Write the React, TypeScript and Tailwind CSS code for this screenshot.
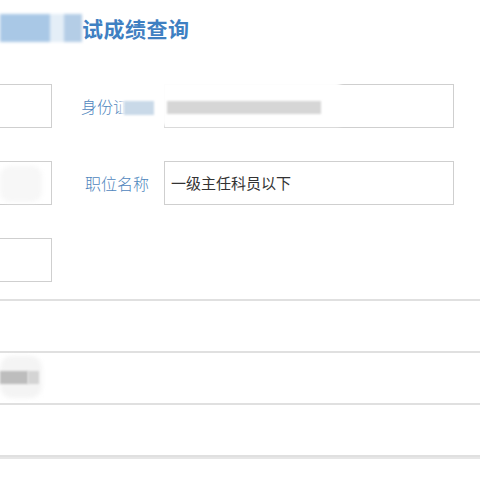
import React from 'react';

const font = { fontFamily: '"Noto Sans CJK SC", "Noto Sans", sans-serif' };

function Box({ className = '', children }: { className?: string; children?: React.ReactNode }) {
  return (
    <div className={`h-[44px] border border-[#cfcfcf] bg-white flex items-center ${className}`}>
      {children}
    </div>
  );
}

export default function App() {
  return (
    <div className="w-[480px] h-[480px] bg-white overflow-hidden relative" style={font}>
      {/* title */}
      <div className="flex items-center pt-[14px] h-[42px]">
        <div className="flex h-[28px] w-[82px] blur-[1.5px]">
          <div className="w-[50px] bg-[#a9c8e6]" />
          <div className="w-[14px] bg-[#e4eef7]" />
          <div className="w-[18px] bg-[#b4cde6]" />
        </div>
        <h1 className="text-[21px] leading-[28px] font-bold text-[#3f80c2] tracking-[0.5px]">试成绩查询</h1>
      </div>

      {/* form */}
      <div className="mt-[42px] flex flex-col gap-[33px]">
        <div className="flex items-center">
          <Box className="ml-[-10px] w-[62px]" />
          <span className="ml-[29px] w-[83px] text-[16px] font-light text-[#4f86bd]">身份证</span>
          <Box className="w-[290px]" />
        </div>
        <div className="flex items-center">
          <Box className="ml-[-10px] w-[62px]" />
          <span className="ml-[33px] w-[79px] text-[16px] font-light text-[#4f86bd]">职位名称</span>
          <Box className="w-[290px] pl-[6px]">
            <span className="text-[15px] text-[#333]">一级主任科员以下</span>
          </Box>
        </div>
        <div className="flex items-center">
          <Box className="ml-[-10px] w-[62px]" />
        </div>
      </div>

      {/* table rows */}
      <div className="mt-[17px]">
        <div className="h-[52px] border-t-2 border-[#e0e0e0]" />
        <div className="h-[52px] border-t-2 border-[#e0e0e0]" />
        <div className="h-[52px] border-t-2 border-[#e0e0e0]" />
        <div className="h-[2px] border-t-2 border-[#e0e0e0]" />
        <div className="h-[2px] border-t-2 border-[#e6e6e6]" />
      </div>

      {/* mosaics */}
      <div className="absolute left-[121px] top-[76px] w-[219px] h-[50px] bg-white/95 blur-[2px]" />
      <div className="absolute left-[124px] top-[101px] w-[30px] h-[14px] bg-[#c9d9e8] blur-[1px]" />
      <div className="absolute left-[167px] top-[101px] w-[154px] h-[13px] bg-[#d6d6d6] blur-[1px]" />
      <div className="absolute left-[0px] top-[166px] w-[42px] h-[36px] rounded-[10px] bg-[#f7f7f7] blur-[2px]" />
      <div className="absolute left-[0px] top-[356px] w-[42px] h-[42px] rounded-[12px] bg-[#f4f4f4] blur-[2px]" />
      <div className="absolute left-[0px] top-[371px] w-[28px] h-[13px] bg-[#bdbdbd] blur-[1px]" />
      <div className="absolute left-[28px] top-[371px] w-[11px] h-[13px] bg-[#d4d4d4] blur-[1px]" />
    </div>
  );
}
